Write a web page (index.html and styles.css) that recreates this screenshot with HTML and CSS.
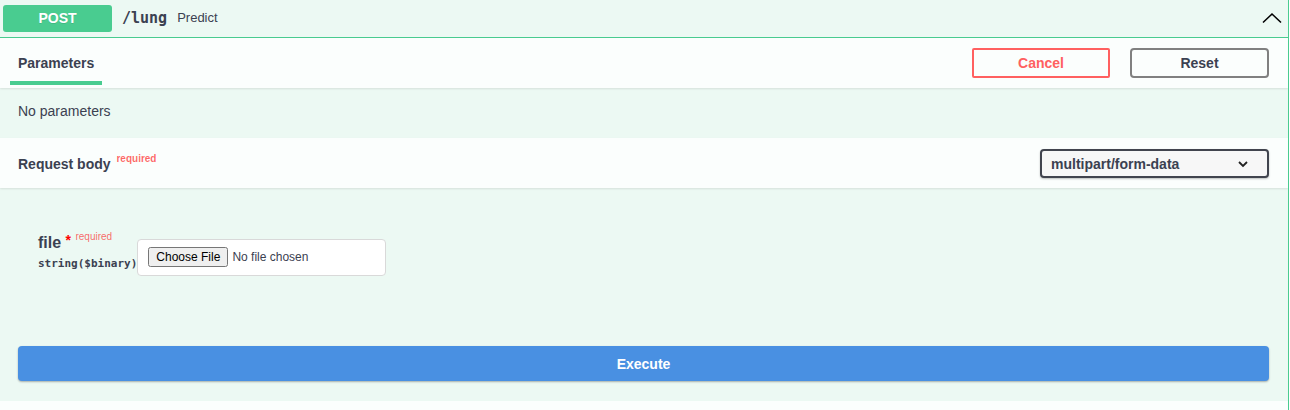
FILE: index.html
```html
<!DOCTYPE html>
<html>
<head>
<meta charset="utf-8">
<link rel="stylesheet" href="styles.css">
</head>
<body>
<div class="opblock">
  <div class="summary">
    <span class="method">POST</span>
    <span class="path">/lung</span>
    <span class="desc">Predict</span>
    <svg class="arrow" width="20" height="12" viewBox="0 0 20 12"><polyline points="1,10.5 10,2 19,10.5" fill="none" stroke="#000" stroke-width="1.6"/></svg>
  </div>
  <div class="section-header">
    <div class="tab">Parameters</div>
    <div class="actions">
      <button class="btn cancel">Cancel</button>
      <button class="btn reset">Reset</button>
    </div>
  </div>
  <div class="params-body">No parameters</div>
  <div class="section-header rb">
    <div class="rb-title">Request body <sup class="req">required</sup></div>
    <div class="select"><span>multipart/form-data</span>
      <svg width="12" height="8" viewBox="0 0 12 8"><polyline points="2,2 6,6 10,2" fill="none" stroke="#222" stroke-width="1.8"/></svg>
    </div>
  </div>
  <div class="rb-body">
    <div class="param-row">
      <div class="pname">
        <div class="pn">file <span class="star">*</span> <sup class="req">required</sup></div>
        <div class="ptype">string($binary)</div>
      </div>
      <div class="fileinput"><input type="file"></div>
    </div>
    <button class="execute">Execute</button>
  </div>
  <div class="responses"></div>
</div>
</body>
</html>
```
FILE: styles.css
```css
html, body { margin: 0; padding: 0; background: #fff; }
body { font-family: "Liberation Sans", Arial, sans-serif; color: #3b4151; }
.opblock {
  width: 1288px;
  border-right: 1px solid #49cc90;
  background: #ecf9f3;
  height: 410px;
  overflow: hidden;
}
.summary {
  border-bottom: 1px solid #49cc90;
  display: flex;
  align-items: center;
  padding-left: 3px;
  box-sizing: border-box;
  height: 38px;
}
.method {
  width: 109px;
  height: 27px;
  margin-top: -1px;
  background: #49cc90;
  border-radius: 3px;
  color: #fff;
  font-weight: bold;
  font-size: 14px;
  display: flex;
  align-items: center;
  justify-content: center;
  text-shadow: 0 1px 0 rgba(0,0,0,.1);
}
.path {
  font-family: "DejaVu Sans Mono", monospace;
  font-weight: bold;
  font-size: 15px;
  margin-left: 10px;
  margin-top: -1px;
}
.desc { font-size: 13px; margin-left: 10px; margin-top: -3px; }
.arrow { margin-left: auto; margin-right: 6px; margin-top: -1px; }
.section-header {
  height: 50px;
  background: rgba(255,255,255,.8);
  box-shadow: 0 1px 2px rgba(0,0,0,.1);
  display: flex;
  align-items: center;
  padding: 0 19px 0 10px;
  position: relative;
}
.tab {
  align-self: flex-end;
  padding: 0 8px;
  font-size: 14px;
  font-weight: bold;
  border-bottom: 4px solid #49cc90;
  height: 44px;
  margin-bottom: 3px;
  line-height: 52px;
}
.actions { margin-left: auto; display: flex; gap: 20px; margin-top: -1px; }
.btn {
  height: 30px;
  background: transparent;
  font-family: "Liberation Sans", Arial, sans-serif;
  font-weight: bold;
  font-size: 14px;
  border-radius: 2px;
  box-sizing: border-box;
  padding: 0;
}
.cancel { width: 138px; border: 2px solid #ff6060; color: #ff6060; }
.reset { width: 139px; border: 2px solid #808080; color: #3b4151; border-radius: 4px; }
.params-body {
  height: 50px;
  box-sizing: border-box;
  padding: 15px 18px 0;
  font-size: 14px;
}
.rb { padding-left: 18px; }
.rb-title { font-size: 14px; font-weight: bold; margin-top: 2px; }
.req {
  color: rgba(255,0,0,.6);
  font-size: 10px;
  font-weight: bold;
  vertical-align: 0;
  position: relative;
  top: -7px;
  margin-left: 2px;
}
.select {
  margin-left: auto;
  width: 229px;
  height: 29px;
  box-sizing: border-box;
  border: 2px solid #41444e;
  border-radius: 4px;
  background: #f7f7f7;
  box-shadow: 0 1px 2px 0 rgba(0,0,0,.25);
  display: flex;
  align-items: center;
  justify-content: space-between;
  padding: 0 18px 0 9px;
  font-size: 14px;
  font-weight: bold;
  margin-top: 1px;
}
.rb-body {
  height: 213px;
  box-sizing: border-box;
  padding: 45px 19px 0 18px;
}
.param-row { display: flex; align-items: flex-start; padding-left: 20px; }
.pn { font-size: 16px; font-weight: bold; line-height: 20px; }
.star { color: red; font-size: 14px; position: relative; top: -3px; }
.pn .req { top: -8px; font-weight: normal; margin-left: 0; }
.ptype {
  font-family: "DejaVu Sans Mono", monospace;
  font-size: 11px;
  font-weight: bold;
  margin-top: 2px;
}
.fileinput {
  margin-top: 6px;
  width: 249px;
  height: 37px;
  box-sizing: border-box;
  background: #fff;
  border: 1px solid #d9d9d9;
  border-radius: 4px;
  padding: 7px 10px;
}
.fileinput input { font-family: "Liberation Sans", Arial, sans-serif; font-size: 12px; color: #3b4151; }
.execute {
  display: block;
  width: 100%;
  height: 35px;
  margin-top: 70px;
  background: #4990e2;
  border: none;
  border-radius: 4px;
  color: #fff;
  font-family: "Liberation Sans", Arial, sans-serif;
  font-weight: bold;
  font-size: 14px;
  box-shadow: 0 1px 2px rgba(0,0,0,.3);
}
.responses { height: 20px; background: rgba(255,255,255,.8); }
```
